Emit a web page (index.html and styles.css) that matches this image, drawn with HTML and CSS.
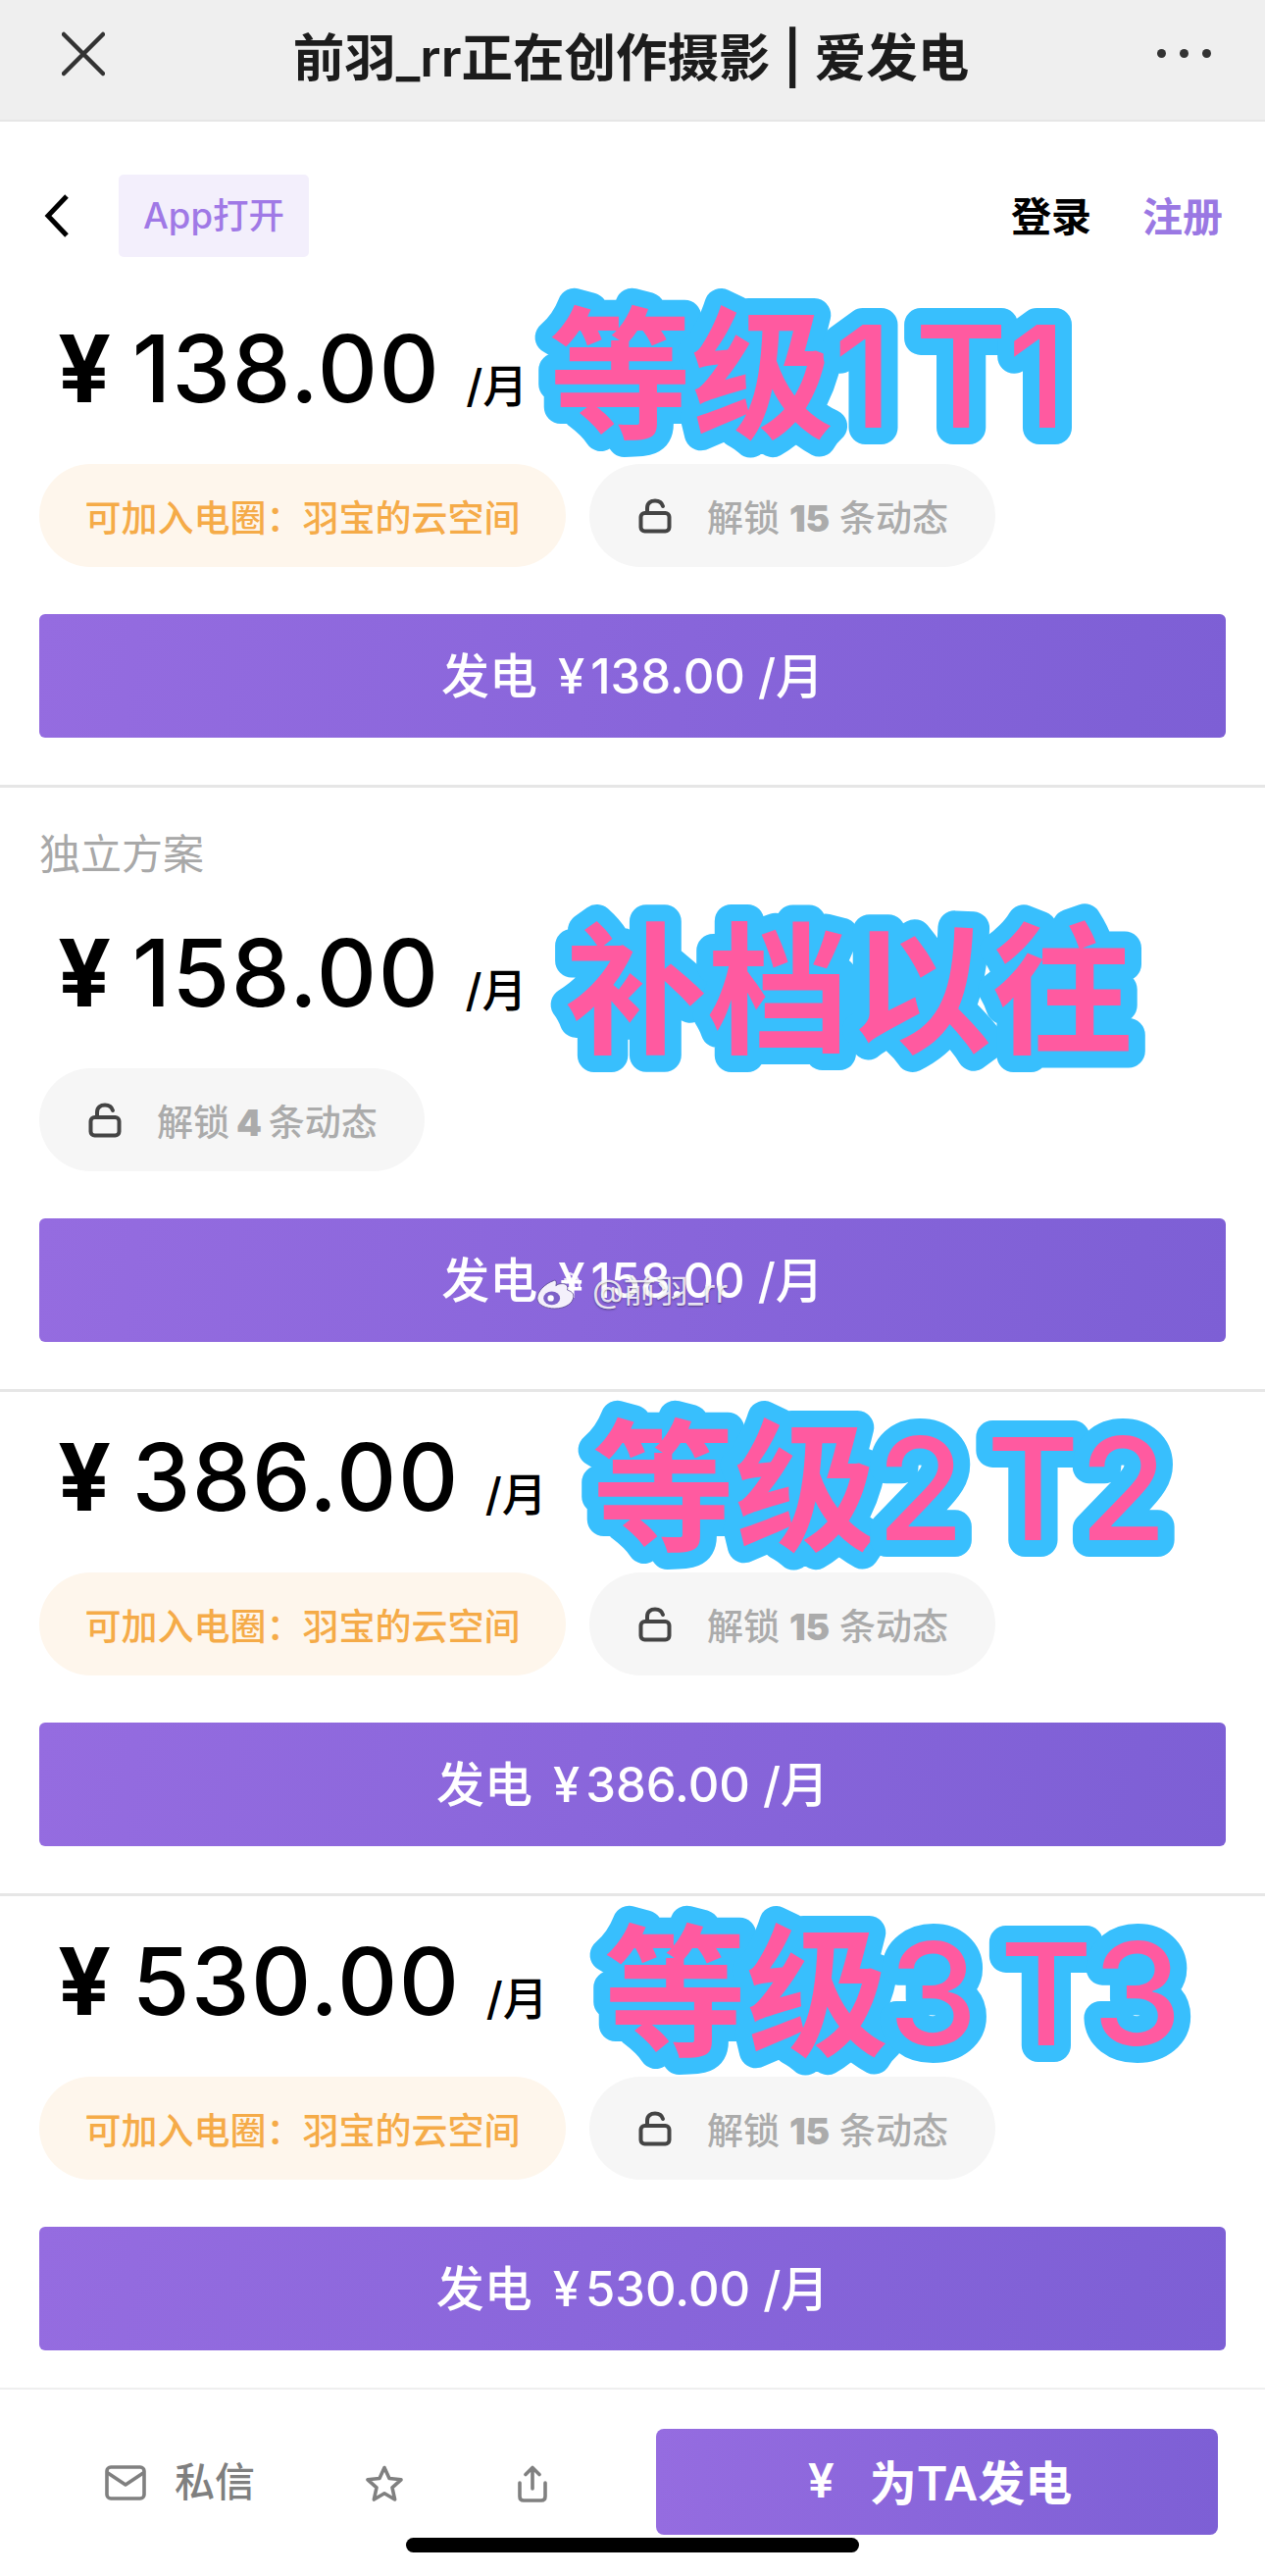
FILE: index.html
```html
<!DOCTYPE html>
<html lang="zh-CN">
<head>
<meta charset="utf-8"/>
<meta content="width=device-width, initial-scale=1.0" name="viewport"/>
<title>前羽_rr正在创作摄影 | 爱发电</title>
<link rel="stylesheet" href="styles.css">
</head>
<body>
<div class="page">
<header class="top-bar">
<svg class="top-close" width="44" height="46" viewBox="0 0 44 46"><path d="M2 3 L42 43 M42 3 L2 43"/></svg>
<div class="top-title">前羽_rr正在创作摄影 | 爱发电</div>
<div class="top-dots"><span></span><span></span><span></span></div>
</header>

<nav class="nav">
<svg class="nav-back" width="26" height="44" viewBox="0 0 26 44"><path d="M23 2 L4 22 L23 42"/></svg>
<div class="nav-app">App打开</div>
<div class="nav-login">登录</div>
<div class="nav-register">注册</div>
</nav>

<section class="plan">
<div class="price"><span class="yen">¥</span>138.00<span class="per">/月</span></div>
<div class="pills">
<div class="pill pill-circle">可加入电圈：羽宝的云空间</div>
<div class="pill pill-lock">
<svg width="34" height="36" viewBox="0 0 34 36"><path d="M9 15 V10 C9 5 12.5 2.5 17 2.5 C21 2.5 24 4.5 25 8"/><rect x="2.5" y="15" width="29" height="18.5" rx="4"/></svg>
<span>解锁 <b>15</b> 条动态</span>
</div>
</div>
<div class="btn-power">发电 <span class="btn-yen">¥</span>138.00 /月</div>
<svg class="sticker sticker-1" width="600" height="190"><text x="24" y="150">等级<tspan class="latin">1 T1</tspan></text></svg>
</section>

<section class="plan">
<div class="plan-label">独立方案</div>
<div class="price"><span class="yen">¥</span>158.00<span class="per">/月</span></div>
<div class="pills">
<div class="pill pill-lock pill-short">
<svg width="34" height="36" viewBox="0 0 34 36"><path d="M9 15 V10 C9 5 12.5 2.5 17 2.5 C21 2.5 24 4.5 25 8"/><rect x="2.5" y="15" width="29" height="18.5" rx="4"/></svg>
<span>解锁 <b>4</b> 条动态</span>
</div>
</div>
<div class="btn-power">发电 <span class="btn-yen">¥</span>158.00 /月
<div class="watermark">
<svg width="46" height="38" viewBox="0 0 42 36"><path class="wb-body" d="M17 8 C8 11 1 19 1 25 C1 32 10 35 18 35 C28 35 36 30 36 23 C36 19 32 18 30 17 C31 13 29 11 25 11 C22 11 20 12 19 13 C20 9 19 7 17 8 Z"/><ellipse class="wb-eye" cx="15" cy="25" rx="8" ry="6.5"/><circle class="wb-pupil" cx="14" cy="25" r="3"/><path class="wb-wave" d="M27 7 C33 6 38 11 36 17 M28 1 C37 0 44 8 41 17"/></svg>
<span>@前羽_rr</span>
</div>
</div>
<svg class="sticker sticker-2" width="660" height="190"><text x="26" y="150">补档以往</text></svg>
</section>

<section class="plan">
<div class="price"><span class="yen">¥</span>386.00<span class="per">/月</span></div>
<div class="pills">
<div class="pill pill-circle">可加入电圈：羽宝的云空间</div>
<div class="pill pill-lock">
<svg width="34" height="36" viewBox="0 0 34 36"><path d="M9 15 V10 C9 5 12.5 2.5 17 2.5 C21 2.5 24 4.5 25 8"/><rect x="2.5" y="15" width="29" height="18.5" rx="4"/></svg>
<span>解锁 <b>15</b> 条动态</span>
</div>
</div>
<div class="btn-power">发电 <span class="btn-yen">¥</span>386.00 /月</div>
<svg class="sticker sticker-3" width="640" height="190"><text x="24" y="150">等级<tspan class="latin">2 T2</tspan></text></svg>
</section>

<section class="plan plan-last">
<div class="price"><span class="yen">¥</span>530.00<span class="per">/月</span></div>
<div class="pills">
<div class="pill pill-circle">可加入电圈：羽宝的云空间</div>
<div class="pill pill-lock">
<svg width="34" height="36" viewBox="0 0 34 36"><path d="M9 15 V10 C9 5 12.5 2.5 17 2.5 C21 2.5 24 4.5 25 8"/><rect x="2.5" y="15" width="29" height="18.5" rx="4"/></svg>
<span>解锁 <b>15</b> 条动态</span>
</div>
</div>
<div class="btn-power">发电 <span class="btn-yen">¥</span>530.00 /月</div>
<svg class="sticker sticker-4" width="640" height="190"><text x="24" y="150">等级<tspan class="latin">3 T3</tspan></text></svg>
</section>

<footer class="footer">
<svg class="foot-mail" width="42" height="36" viewBox="0 0 42 36"><rect x="2" y="2" width="38" height="32" rx="4"/><path d="M3 8 L21 20 L39 8"/></svg>
<div class="foot-msg">私信</div>
<svg class="foot-star" width="38" height="38" viewBox="0 0 38 38"><path d="M19 2.5 L24 13.5 L36 14.8 L27 22.8 L29.6 35 L19 28.8 L8.4 35 L11 22.8 L2 14.8 L14 13.5 Z"/></svg>
<svg class="foot-share" width="30" height="38" viewBox="0 0 30 38"><path d="M15 24 V3 M8 9.5 L15 2.5 L22 9.5 M2 18 V32 C2 34.5 3.5 36 6 36 H24 C26.5 36 28 34.5 28 32 V18"/></svg>
<div class="foot-cta"><span class="foot-yen">¥</span>为TA发电</div>
<div class="home-bar"></div>
</footer>
</div>
</body>
</html>
```

FILE: styles.css
```css
* {
    margin: 0;
    padding: 0;
    box-sizing: border-box;
}

body {
    font-family: Inter, "Noto Sans CJK SC", sans-serif;
    background: #fff;
    color: #000;
}

.page {
    width: 1290px;
    height: 2626px;
    overflow: hidden;
}

/* wechat bar */
.top-bar {
    height: 124px;
    background: #efefef;
    border-bottom: 2px solid #e6e6e6;
    display: flex;
    align-items: center;
    padding: 0 55px 13px 63px;
}

.top-close path {
    fill: none;
    stroke: #333;
    stroke-width: 4.5;
    stroke-linecap: round;
}

.top-title {
    flex: 1;
    text-align: center;
    font-size: 52.5px;
    font-weight: 600;
    color: #1c1c1c;
    white-space: nowrap;
}

.top-dots {
    display: flex;
    gap: 14px;
}

.top-dots span {
    width: 9px;
    height: 9px;
    border-radius: 50%;
    background: #333;
}

/* nav */
.nav {
    display: flex;
    align-items: center;
    padding: 54px 43px 27px 45px;
}

.nav-back path {
    fill: none;
    stroke: #000;
    stroke-width: 5;
}

.nav-app {
    margin-left: 50px;
    width: 194px;
    height: 84px;
    line-height: 84px;
    text-align: center;
    background: #f3effc;
    border-radius: 5px;
    color: #a079e6;
    font-size: 36.5px;
    font-weight: 500;
}

.nav-login {
    margin-left: auto;
    margin-bottom: 4px;
    font-size: 41px;
    font-weight: 600;
}

.nav-register {
    margin-left: 52px;
    margin-bottom: 4px;
    font-size: 41px;
    font-weight: 600;
    color: #9a78e3;
}

/* plans */
.plan {
    position: relative;
    padding: 37px 40px 48px 40px;
    border-bottom: 3px solid #e6e6e6;
}

.plan-last {
    padding-bottom: 38px;
    border-bottom: none;
}

.plan-label {
    height: 66px;
    line-height: 64px;
    margin-bottom: 37px;
    margin-top: -1px;
    font-size: 42px;
    color: #a8a8a8;
}

.price {
    height: 100px;
    line-height: 100px;
    margin-bottom: 47px;
    padding-left: 19px;
    font-size: 95px;
    font-weight: 500;
    letter-spacing: 1.5px;
    white-space: nowrap;
}

.yen {
    font-weight: 700;
    margin-right: 20px;
}

.per {
    margin-left: 26px;
    font-size: 46px;
    font-weight: 500;
    letter-spacing: 0;
}

.pills {
    display: flex;
    gap: 24px;
    margin-bottom: 48px;
}

.pill {
    height: 105px;
    border-radius: 53px;
    font-size: 37px;
    font-weight: 500;
    display: flex;
    align-items: center;
}

.pill-circle {
    width: 537px;
    justify-content: center;
    background: #fef6ec;
    color: #f5ab48;
}

.pill-lock {
    padding: 0 48px 0 50px;
    background: #f6f6f6;
    color: #ababab;
    gap: 36px;
}

.pill-short {
    word-spacing: -3px;
}

.pill-lock b {
    font-weight: 900;
}

.pill-lock svg path,
.pill-lock svg rect {
    fill: none;
    stroke: #444;
    stroke-width: 4;
    stroke-linecap: round;
}

.btn-power {
    position: relative;
    height: 126px;
    line-height: 128px;
    text-align: center;
    border-radius: 6px;
    background: linear-gradient(100deg, #956ce0, #7d5fd5);
    color: #fff;
    font-size: 49px;
    font-weight: 500;
}

.btn-yen {
    margin: 0 6px 0 8px;
}

/* watermark lies over the second button */
.watermark {
    position: absolute;
    left: 506px;
    top: 54px;
    display: flex;
    align-items: center;
    gap: 12px;
    height: 40px;
    line-height: 40px;
    font-size: 33px;
    font-weight: 400;
    color: rgba(255, 255, 255, 0.85);
    text-shadow: 0 1px 2px rgba(0, 0, 0, 0.4);
}

.wb-body {
    fill: #f4f0fb;
    stroke: #5a4a90;
    stroke-width: 0.8;
}

.wb-eye {
    fill: #7d62c8;
}

.wb-pupil {
    fill: #fff;
}

.wb-wave {
    fill: none;
    stroke: rgba(255, 255, 255, 0.8);
    stroke-width: 2.5;
}

/* pasted on labels */
.sticker {
    position: absolute;
    overflow: visible;
}

.sticker text {
    font-family: Inter, "Noto Sans CJK SC", sans-serif;
    font-size: 145px;
    font-weight: 700;
    fill: #ff5aa0;
    stroke: #38bffd;
    stroke-width: 34px;
    stroke-linejoin: round;
    paint-order: stroke;
}

.sticker .latin {
    font-weight: 500;
    word-spacing: -16px;
}

.sticker-1 {
    left: 536px;
    top: -3px;
}

.sticker-2 {
    left: 550px;
    top: 110px;
}

.sticker-3 {
    left: 580px;
    top: 1px;
}

.sticker-4 {
    left: 592px;
    top: 2px;
}

/* footer */
.footer {
    position: relative;
    height: 192px;
    border-top: 2px solid #efefef;
    padding: 40px 48px 0 107px;
    display: flex;
    align-items: flex-start;
}

.footer svg {
    margin-top: 37px;
}

.footer svg path,
.footer svg rect {
    fill: none;
    stroke: #808080;
    stroke-width: 3.6;
    stroke-linecap: round;
    stroke-linejoin: round;
}

.foot-msg {
    margin-left: 29px;
    margin-top: 29px;
    font-size: 41px;
    font-weight: 500;
    line-height: 50px;
    color: #7f7f7f;
}

.foot-star {
    margin-left: 113px;
}

.foot-share {
    margin-left: 117px;
}

.foot-cta {
    margin-left: auto;
    width: 573px;
    height: 108px;
    padding: 0 0 4px 6px;
    display: flex;
    align-items: center;
    justify-content: center;
    border-radius: 8px;
    background: linear-gradient(90deg, #956ce0, #7d5fd5);
    color: #fff;
    font-size: 48px;
    font-weight: 600;
}

.foot-yen {
    margin-right: 36px;
}

.home-bar {
    position: absolute;
    left: 414px;
    top: 151px;
    width: 462px;
    height: 15px;
    border-radius: 8px;
    background: #000;
}
```
